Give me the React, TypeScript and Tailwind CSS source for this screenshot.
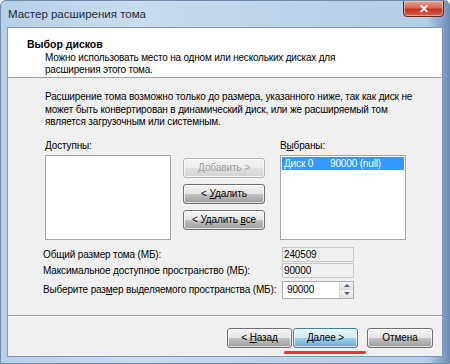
import React from "react";

const font = { fontFamily: '"Liberation Sans", Arial, sans-serif' };

function WinButton({
  label,
  disabled,
  focused,
  className = "",
}: {
  label: React.ReactNode;
  disabled?: boolean;
  focused?: boolean;
  className?: string;
}) {
  const base =
    "flex items-center justify-center whitespace-nowrap rounded-[3px] border text-[10px] tracking-[-0.1px] leading-none shadow-[inset_0_0_0_1px_rgba(255,255,255,0.7)]";
  if (disabled) {
    return (
      <div
        className={`${base} border-[#b5b5b5] bg-[linear-gradient(#f4f4f4,#ececec_50%,#e0e0e0_50%,#d4d4d4)] text-[#a0a0a0] ${className}`}
      >
        {label}
      </div>
    );
  }
  if (focused) {
    return (
      <div
        className={`${base} border-[#3c7fb1] bg-[linear-gradient(#e7f5fd,#d0ebfa_50%,#9fd2ee_50%,#6fa9c6)] text-black ${className}`}
      >
        {label}
      </div>
    );
  }
  return (
    <div
      className={`${base} border-[#707070] bg-[linear-gradient(#f5f5f5,#e3e3e3_50%,#c4c4c4_50%,#9c9c9c)] text-black ${className}`}
    >
      {label}
    </div>
  );
}

export default function App() {
  return (
    <div
      className="relative w-[450px] h-[364px] flex flex-col overflow-hidden rounded-t-[6px] border border-[#6e8bab] bg-[linear-gradient(90deg,#b7cfe8,#c9dcf0_30%,#bed4ea_60%,#b5cde7_95%,#6f8fbd)] text-black whitespace-nowrap"
      style={font}
    >
      {/* Title bar */}
      <div className="relative h-[26px] shrink-0 flex items-center pl-[7px] pt-[1px]">
        <span className="text-[11.5px] text-[#1e2a3a]">Мастер расширения тома</span>
        <div className="absolute right-[5px] top-[-1px] w-[41px] h-[17px] rounded-b-[4px] border border-[#6a2418] bg-[linear-gradient(#e9a796,#d4685a_45%,#c2321f_55%,#d5624a)] flex items-center justify-center shadow-[inset_0_0_0_1px_rgba(255,220,210,0.5)]">
          <span className="text-white text-[12px] font-bold leading-none">✕</span>
        </div>
      </div>

      {/* Client area */}
      <div className="mx-[6px] mb-[6px] flex-1 flex flex-col border border-[#8199b8] bg-[#f0f0f0]">
        {/* Header */}
        <div className="h-[50px] shrink-0 bg-white border-b border-[#a0a0a0] pt-[9px] pl-[19px]">
          <div className="text-[10.5px] font-bold leading-[14px]">Выбор дисков</div>
          <div className="pl-[18px] text-[10px] tracking-[-0.2px] leading-[12px] mt-[1px]">
            <div>Можно использовать место на одном или нескольких дисках для</div>
            <div>расширения этого тома.</div>
          </div>
        </div>

        {/* Body */}
        <div className="flex-1 flex flex-col pl-[37px] pt-[13px] border-b border-[#a0a0a0] text-[10px] tracking-[-0.15px]">
          <div className="leading-[12.5px]">
            <div>Расширение тома возможно только до размера, указанного ниже, так как диск не</div>
            <div>может быть конвертирован в динамический диск, или же расширяемый том</div>
            <div>является загрузочным или системным.</div>
          </div>

          <div className="flex mt-[10px]">
            <div className="flex flex-col w-[126px]">
              <div className="leading-[13px]">
                <span className="underline">Д</span>оступны:
              </div>
              <div className="mt-[3px] h-[85px] border border-[#a5a5a5] bg-white" />
            </div>

            <div className="flex flex-col gap-[6px] ml-[12px] pt-[19px] w-[82px]">
              <WinButton disabled className="h-[20px]" label={<span><span className="underline">Д</span>обавить &gt;</span>} />
              <WinButton className="h-[20px]" label={<span>&lt; <span className="underline">У</span>далить</span>} />
              <WinButton className="h-[20px]" label={<span>&lt; Удалить <span className="underline">в</span>се</span>} />
            </div>

            <div className="flex flex-col w-[126px] ml-[15px]">
              <div className="leading-[13px]">
                В<span className="underline">ы</span>браны:
              </div>
              <div className="mt-[3px] h-[85px] border border-[#a5a5a5] bg-white p-[1px]">
                <div className="h-[13px] bg-[#3399ff] text-white leading-[13px] flex pl-[2px]">
                  <span className="w-[46px]">Диск 0</span>
                  <span>90000 (null)</span>
                </div>
              </div>
            </div>
          </div>

          <div className="flex flex-col mt-[7px] -ml-[2px]">
            <div className="flex items-center h-[15px]">
              <span className="w-[239px]">Общий размер тома (МБ):</span>
              <div className="w-[72px] h-[15px] border border-[#c8c8c8] bg-[#f0f0f0] leading-[13px] pl-[1px]">240509</div>
            </div>
            <div className="flex items-center h-[15px] mt-[1px]">
              <span className="w-[239px]">Максимальное доступное пространство (МБ):</span>
              <div className="w-[72px] h-[15px] border border-[#c8c8c8] bg-[#f0f0f0] leading-[13px] pl-[1px]">90000</div>
            </div>
            <div className="flex items-center h-[18px] mt-[3px]">
              <span className="w-[239px]">
                Выберите раз<span className="underline">м</span>ер выделяемого пространства (МБ):
              </span>
              <div className="w-[72px] h-[18px] border border-[#abadb3] bg-white flex">
                <span className="flex-1 pl-[4px] leading-[16px]">90000</span>
                <div className="w-[14px] flex flex-col border-l border-[#d6d6d6]">
                  <div className="flex-1 flex items-center justify-center border-b border-[#d6d6d6] bg-[linear-gradient(#f5f5f5,#e2e2e2)]">
                    <span className="block w-0 h-0 border-l-[3px] border-r-[3px] border-b-[3px] border-l-transparent border-r-transparent border-b-[#4d6185]" />
                  </div>
                  <div className="flex-1 flex items-center justify-center bg-[linear-gradient(#f5f5f5,#e2e2e2)]">
                    <span className="block w-0 h-0 border-l-[3px] border-r-[3px] border-t-[3px] border-l-transparent border-r-transparent border-t-[#4d6185]" />
                  </div>
                </div>
              </div>
            </div>
          </div>
        </div>

        {/* Footer */}
        <div className="h-[40px] shrink-0 border-t border-white flex justify-end items-start pt-[11px] pr-[9px]">
          <WinButton className="w-[65px] h-[20px]" label={<span>&lt; <span className="underline">Н</span>азад</span>} />
          <div className="relative ml-[1px]">
            <WinButton focused className="w-[65px] h-[20px]" label={<span><span className="underline">Д</span>алее &gt;</span>} />
            <div className="absolute left-[-9px] top-[23px] w-[82px] h-[3px] rounded-full bg-[#e8333a]" />
          </div>
          <WinButton className="w-[66px] h-[20px] ml-[9px]" label="Отмена" />
        </div>
      </div>
    </div>
  );
}
